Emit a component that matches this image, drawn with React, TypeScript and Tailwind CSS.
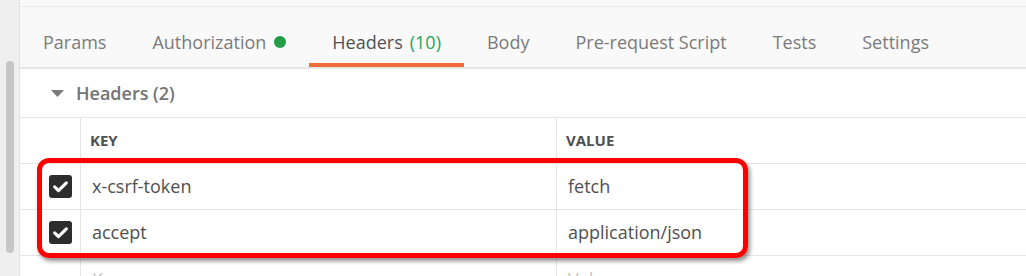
import React from "react";

const tabs = [
  { label: "Params" },
  { label: "Authorization", dot: true },
  { label: "Headers", count: "(10)", active: true },
  { label: "Body" },
  { label: "Pre-request Script" },
  { label: "Tests" },
  { label: "Settings" },
];

const rows = [
  { key: "x-csrf-token", value: "fetch" },
  { key: "accept", value: "application/json" },
];

const Checkbox = () => (
  <div className="w-[23px] h-[23px] rounded-[3px] bg-[#2d2d2d] flex items-center justify-center">
    <svg width="17" height="17" viewBox="0 0 16 16" fill="none">
      <path d="M2.5 8.3l3.6 3.5 7.4-7.3" stroke="#fff" strokeWidth="2.9" strokeLinecap="round" strokeLinejoin="round" />
    </svg>
  </div>
);

export default function App() {
  return (
    <div
      className="relative flex h-[276px] w-full overflow-hidden bg-white"
      style={{ fontFamily: '"Open Sans", "Noto Sans", sans-serif' }}
    >
      {/* left scroll gutter */}
      <div className="relative w-[20px] shrink-0 bg-[#efefef] border-r border-[#e2e2e2]">
        <div className="absolute left-[6px] top-[61px] w-[8px] h-[192px] rounded-full bg-[#c6c6c6]" />
      </div>

      <div className="flex-1 flex flex-col min-w-0">
        <div className="h-[7px] shrink-0 bg-[#fafafa] border-b border-[#e8e8e8]" />

        {/* tab bar */}
        <div className="h-[62px] shrink-0 bg-[#f9f9f9] border-b-2 border-[#e6e6e6] flex items-end">
          {tabs.map((t) => (
            <div
              key={t.label}
              className={`h-full px-[23px] flex items-center text-[18px] whitespace-nowrap border-b-4 ${
                t.active ? "border-[#f26b3a] text-[#505050]" : "border-transparent text-[#7b7b7b]"
              }`}
            >
              <span className="pt-[14px]">{t.label}</span>
              {t.count && <span className="pt-[14px] ml-[7px] text-[#26a65b]">{t.count}</span>}
              {t.dot && <span className="ml-[8px] mt-[13px] w-[12px] h-[12px] rounded-full bg-[#1f9e47]" />}
            </div>
          ))}
        </div>

        {/* section header */}
        <div className="h-[49px] shrink-0 flex items-center pl-[31px] border-b border-[#e6e6e6]">
          <svg width="13" height="8" viewBox="0 0 13 8" className="mt-[2px]">
            <path d="M0 0h13L6.5 7z" fill="#7a7a7a" />
          </svg>
          <span className="ml-[12px] text-[18px] font-semibold text-[#737373]">Headers (2)</span>
        </div>

        {/* table */}
        <div className="grid shrink-0 grid-cols-[60px_476px_1fr]">
          <div className="h-[46px] border-b border-[#e6e6e6]" />
          <div className="h-[46px] border-l border-b border-[#e6e6e6] pl-[9px] flex items-center text-[15px] font-bold text-[#505050]">
            KEY
          </div>
          <div className="h-[46px] border-l border-b border-[#e6e6e6] pl-[9px] flex items-center text-[15px] font-bold text-[#505050]">
            VALUE
          </div>

          {rows.map((r) => (
            <React.Fragment key={r.key}>
              <div className="h-[46px] border-b border-[#e6e6e6] flex items-center pl-[29px]">
                <Checkbox />
              </div>
              <div className="h-[46px] border-l border-b border-[#e6e6e6] pl-[11px] flex items-center text-[18px] text-[#505050]">
                {r.key}
              </div>
              <div className="h-[46px] border-l border-b border-[#e6e6e6] pl-[11px] flex items-center text-[18px] text-[#505050]">
                {r.value}
              </div>
            </React.Fragment>
          ))}

          <div className="h-[46px]" />
          <div className="h-[46px] border-l border-[#e6e6e6] pl-[11px] flex items-center text-[18px] text-[#c4c4c4]">
            Key
          </div>
          <div className="h-[46px] border-l border-[#e6e6e6] pl-[11px] flex items-center text-[18px] text-[#c4c4c4]">
            Value
          </div>
        </div>
      </div>

      {/* red annotation box */}
      <div className="absolute left-[37px] top-[158px] w-[711px] h-[100px] border-[5px] border-[#f00] rounded-[12px] shadow-[2px_3px_4px_rgba(0,0,0,0.45)]" />
    </div>
  );
}
